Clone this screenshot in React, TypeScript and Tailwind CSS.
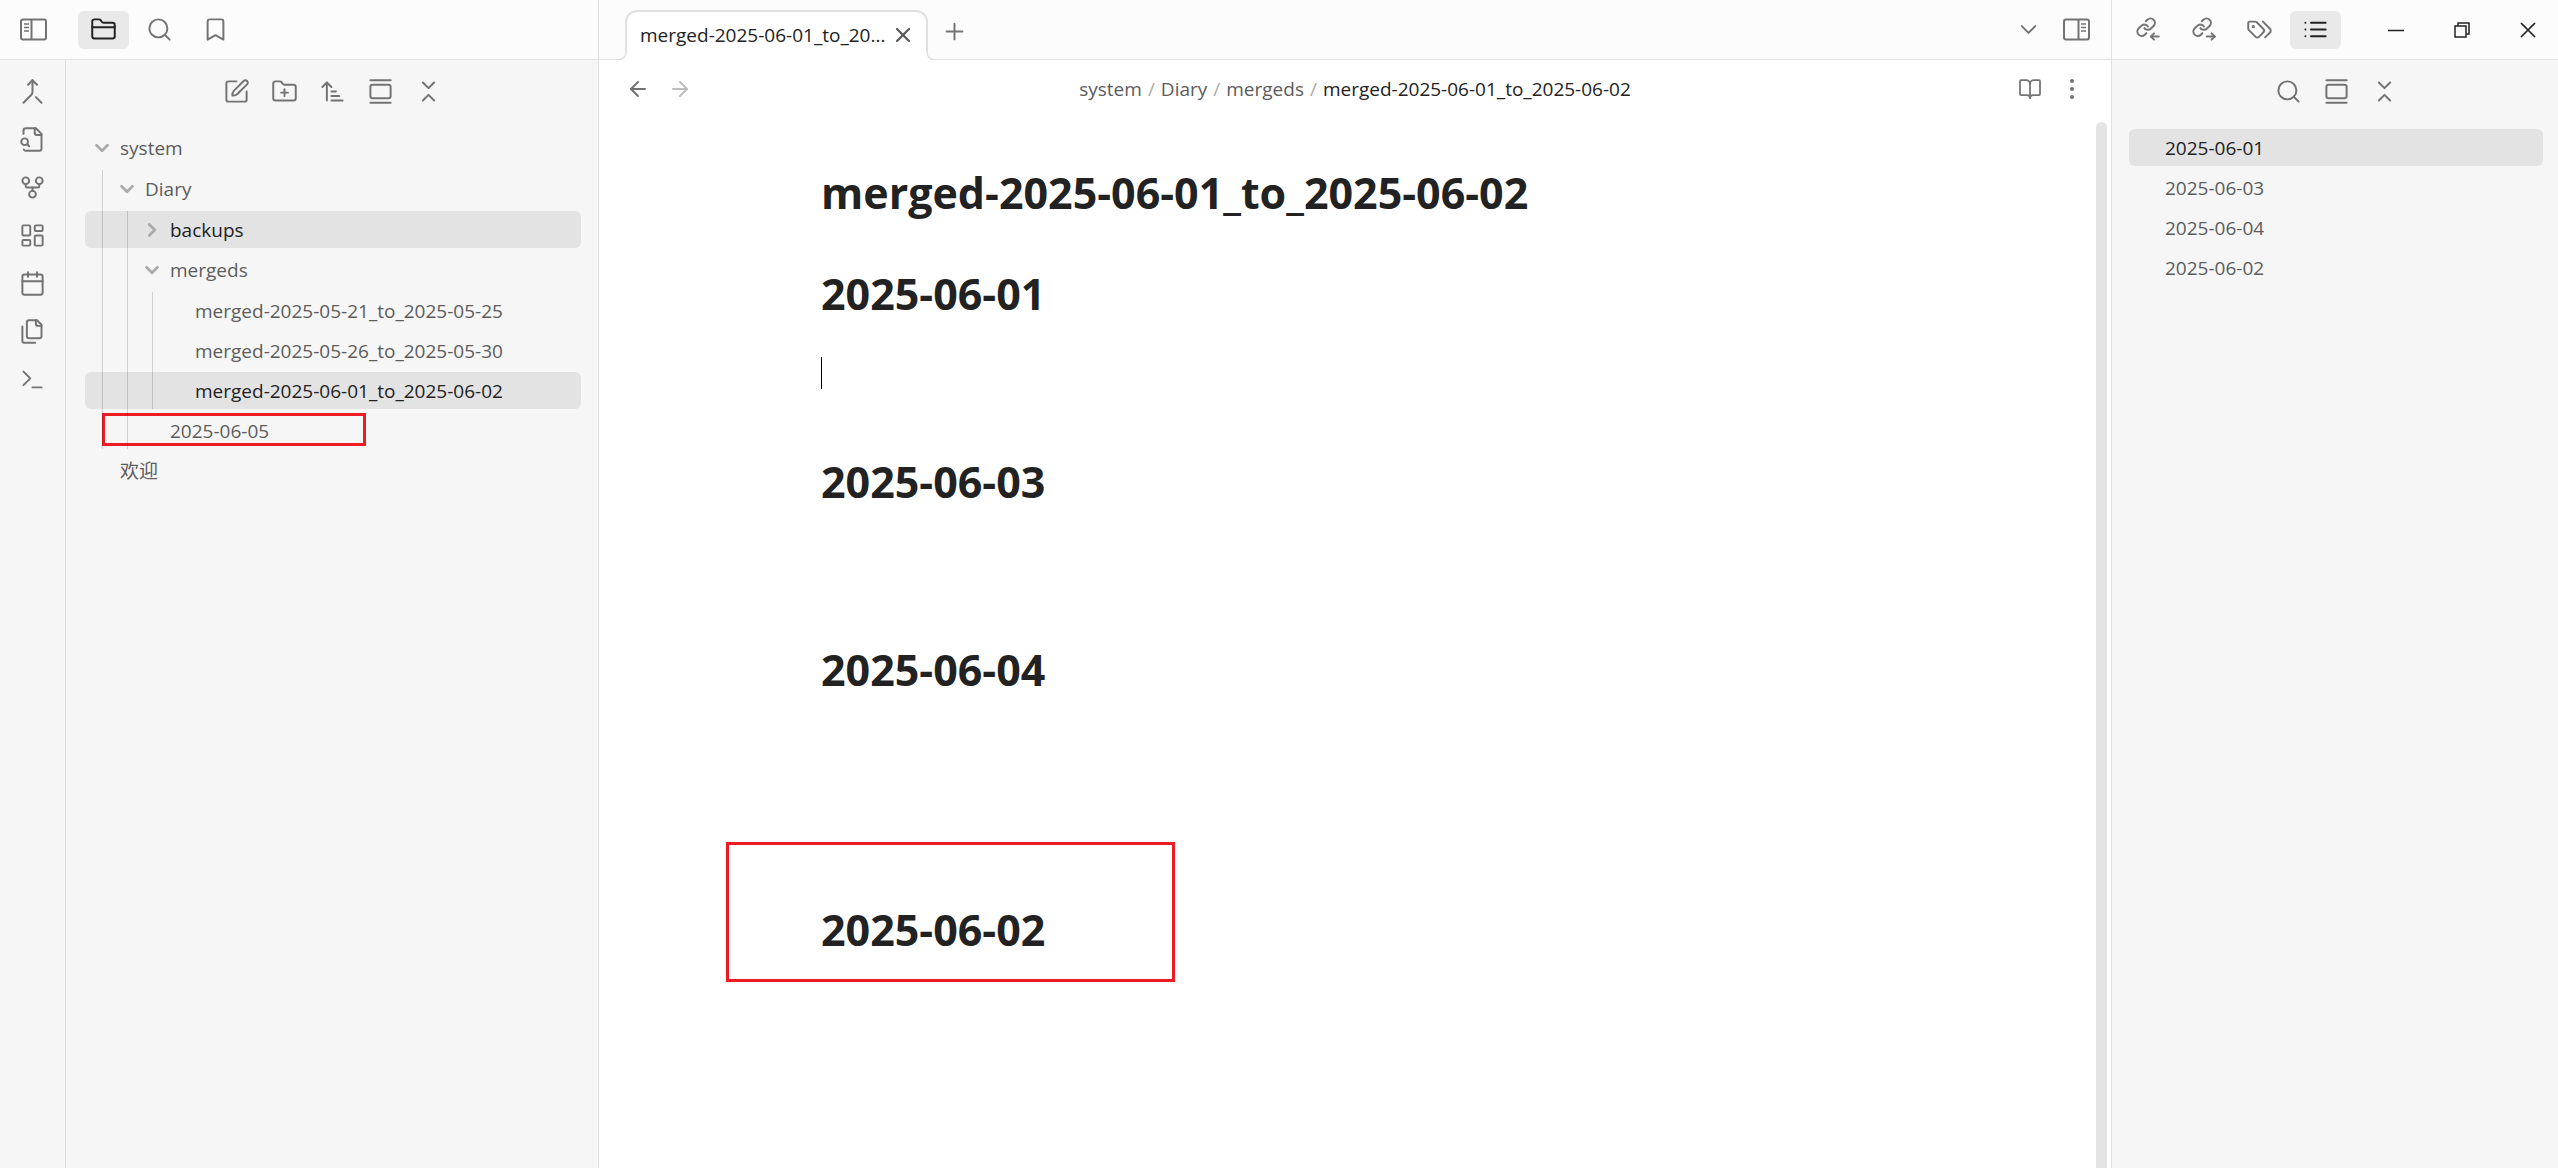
import React, { ReactNode } from "react";

type IconProps = { size?: string; stroke?: number; children: ReactNode };

function Icon({ size = "size-[27px]", stroke = 1.75, children }: IconProps) {
  return (
    <svg
      className={`${size} shrink-0`}
      viewBox="0 0 24 24"
      fill="none"
      stroke="currentColor"
      strokeWidth={stroke}
      strokeLinecap="round"
      strokeLinejoin="round"
      aria-hidden="true"
    >
      {children}
    </svg>
  );
}

const chain = (
  <g transform="translate(1.4 .6) scale(.78)" strokeWidth="2.3">
    <path d="M10 13a5 5 0 0 0 7.54.54l3-3a5 5 0 0 0-7.07-7.07l-1.72 1.71" />
    <path d="M14 11a5 5 0 0 0-7.54-.54l-3 3a5 5 0 0 0 7.07 7.07l1.71-1.71" />
  </g>
);

const icons = {
  folder: (
    <>
      <path d="M20 20a2 2 0 0 0 2-2V8a2 2 0 0 0-2-2h-7.9a2 2 0 0 1-1.69-.9L9.6 3.9A2 2 0 0 0 7.93 3H4a2 2 0 0 0-2 2v13a2 2 0 0 0 2 2Z" />
      <path d="M2 10h20" />
    </>
  ),
  search: (
    <>
      <circle cx="11" cy="11" r="8" />
      <path d="m21 21-4.3-4.3" />
    </>
  ),
  bookmark: <path d="m19 21-7-4-7 4V5a2 2 0 0 1 2-2h10a2 2 0 0 1 2 2v16z" />,
  merge: (
    <>
      <path d="m8 6 4-4 4 4" />
      <path d="M12 2v10.3a4 4 0 0 1-1.172 2.872L4 22" />
      <path d="m20 22-5-5" />
    </>
  ),
  fileSearch: (
    <>
      <path d="M14 2v4a2 2 0 0 0 2 2h4" />
      <path d="M4.268 21a2 2 0 0 0 1.727 1H18a2 2 0 0 0 2-2V7l-5-5H6a2 2 0 0 0-2 2v3" />
      <path d="m9 18-1.5-1.5" />
      <circle cx="5" cy="14" r="3" />
    </>
  ),
  fork: (
    <>
      <circle cx="12" cy="18" r="3" />
      <circle cx="6" cy="6" r="3" />
      <circle cx="18" cy="6" r="3" />
      <path d="M18 9v2c0 .6-.4 1-1 1H7c-.6 0-1-.4-1-1V9" />
      <path d="M12 12v3" />
    </>
  ),
  dashboard: (
    <>
      <rect width="7" height="9" x="3" y="3" rx="1" />
      <rect width="7" height="5" x="14" y="3" rx="1" />
      <rect width="7" height="9" x="14" y="12" rx="1" />
      <rect width="7" height="5" x="3" y="16" rx="1" />
    </>
  ),
  calendar: (
    <>
      <path d="M8 2v4" />
      <path d="M16 2v4" />
      <rect width="18" height="18" x="3" y="4" rx="2" />
      <path d="M3 10h18" />
    </>
  ),
  files: (
    <>
      <path d="M20 7h-3a2 2 0 0 1-2-2V2" />
      <path d="M9 18a2 2 0 0 1-2-2V4a2 2 0 0 1 2-2h7l4 4v10a2 2 0 0 1-2 2Z" />
      <path d="M3 7.6v12.8A1.6 1.6 0 0 0 4.6 22h9.8" />
    </>
  ),
  terminal: (
    <>
      <path d="m4 17 6-6-6-6" />
      <path d="M12 19h8" />
    </>
  ),
  edit: (
    <>
      <path d="M12 3H5a2 2 0 0 0-2 2v14a2 2 0 0 0 2 2h14a2 2 0 0 0 2-2v-7" />
      <path d="M18.375 2.625a2.121 2.121 0 1 1 3 3L13 14c-1 1-3.2 1.8-4.6 1.6-.2-1.4.6-3.6 1.6-4.6Z" />
    </>
  ),
  folderPlus: (
    <>
      <path d="M12 10v6" />
      <path d="M9 13h6" />
      <path d="M20 20a2 2 0 0 0 2-2V8a2 2 0 0 0-2-2h-7.9a2 2 0 0 1-1.69-.9L9.6 3.9A2 2 0 0 0 7.93 3H4a2 2 0 0 0-2 2v13a2 2 0 0 0 2 2Z" />
    </>
  ),
  sort: (
    <>
      <path d="m3 8 4-4 4 4" />
      <path d="M7 4v16" />
      <path d="M11 12h4" />
      <path d="M11 16h7" />
      <path d="M11 20h10" />
    </>
  ),
  gallery: (
    <>
      <path d="M3 2h18" />
      <rect width="18" height="12" x="3" y="6" rx="2" />
      <path d="M3 22h18" />
    </>
  ),
  collapse: (
    <>
      <path d="m7 20 5-5 5 5" />
      <path d="m7 4 5 5 5-5" />
    </>
  ),
  chevronDown: <path d="m6 9 6 6 6-6" />,
  chevronRight: <path d="m9 18 6-6-6-6" />,
  plus: (
    <>
      <path d="M5 12h14" />
      <path d="M12 5v14" />
    </>
  ),
  close: (
    <>
      <path d="M18 6 6 18" />
      <path d="m6 6 12 12" />
    </>
  ),
  arrowLeft: (
    <>
      <path d="m12 19-7-7 7-7" />
      <path d="M19 12H5" />
    </>
  ),
  arrowRight: (
    <>
      <path d="M5 12h14" />
      <path d="m12 5 7 7-7 7" />
    </>
  ),
  book: (
    <>
      <path d="M12 7v14" />
      <path d="M3 18a1 1 0 0 1-1-1V4a1 1 0 0 1 1-1h5a4 4 0 0 1 4 4 4 4 0 0 1 4-4h5a1 1 0 0 1 1 1v13a1 1 0 0 1-1 1h-6a3 3 0 0 0-3 3 3 3 0 0 0-3-3z" />
    </>
  ),
  more: (
    <>
      <circle cx="12" cy="12" r="1" />
      <circle cx="12" cy="4" r="1" />
      <circle cx="12" cy="20" r="1" />
    </>
  ),
  linkIn: (
    <>
      {chain}
      <path d="M22 18.2h-7" />
      <path d="m17.800 15.400-2.800 2.800 2.800 2.800" />
    </>
  ),
  linkOut: (
    <>
      {chain}
      <path d="M15 18.2h7" />
      <path d="m19.200 15.400 2.800 2.800-2.800 2.800" />
    </>
  ),
  tags: (
    <>
      <path d="m15 5 6.3 6.3a2.4 2.4 0 0 1 0 3.4L17 19" />
      <path d="M9.586 5.586A2 2 0 0 0 8.172 5H3a1 1 0 0 0-1 1v5.172a2 2 0 0 0 .586 1.414L8.29 18.29a2.426 2.426 0 0 0 3.42 0l3.58-3.58a2.426 2.426 0 0 0 0-3.42z" />
      <circle cx="6.5" cy="9.5" r=".6" fill="currentColor" />
    </>
  ),
  list: (
    <>
      <path d="M8 6h13" />
      <path d="M8 12h13" />
      <path d="M8 18h13" />
      <path d="M3 6h.01" />
      <path d="M3 12h.01" />
      <path d="M3 18h.01" />
    </>
  ),
};

function PanelIcon({ flip = false }: { flip?: boolean }) {
  return (
    <svg
      className={flip ? "h-[23px] w-[27px] -scale-x-100" : "h-[23px] w-[27px]"}
      viewBox="0 0 27 23"
      fill="none"
      stroke="currentColor"
      strokeWidth="2"
      aria-hidden="true"
    >
      <rect x="1" y="1.5" width="25" height="20" rx="2" />
      <path d="M11.500 1.500v20" />
      <path d="M4 6h5M4 9.500h5M4 13h5" strokeWidth="1.5" />
    </svg>
  );
}

function HeaderButton({ label, active, children }: { label: string; active?: boolean; children: ReactNode }) {
  return (
    <button
      type="button"
      aria-label={label}
      className={
        active
          ? "flex h-[38px] w-[51px] items-center justify-center rounded-md bg-[#e9e9e9] text-[#222222]"
          : "flex h-[38px] w-[51px] items-center justify-center rounded-md"
      }
    >
      <Icon>{children}</Icon>
    </button>
  );
}

function NavButton({ label, children }: { label: string; children: ReactNode }) {
  return (
    <button type="button" aria-label={label} className="flex h-10 w-12 items-center justify-center">
      <Icon>{children}</Icon>
    </button>
  );
}

type Node = { name: string; active?: boolean; open?: boolean; marked?: boolean; children?: Node[] };

const tree: Node[] = [
  {
    name: "system",
    open: true,
    children: [
      {
        name: "Diary",
        open: true,
        children: [
          { name: "backups", active: true, children: [] },
          {
            name: "mergeds",
            open: true,
            children: [
              { name: "merged-2025-05-21_to_2025-05-25" },
              { name: "merged-2025-05-26_to_2025-05-30" },
              { name: "merged-2025-06-01_to_2025-06-02", active: true },
            ],
          },
          { name: "2025-06-05", marked: true },
        ],
      },
    ],
  },
  { name: "欢迎" },
];

const indents = ["pl-[6px]", "pl-[31px]", "pl-14", "pl-[81px]"];
const guides = ["left-[17px]", "left-[42px]", "left-[67px]"];

function TreeItem({ node, depth }: { node: Node; depth: number }) {
  return (
    <li className="relative">
      <button
        type="button"
        aria-expanded={node.children ? !!node.open : undefined}
        className={`flex h-[37px] w-full items-center rounded-md text-left ${indents[depth]} ${
          node.active ? "bg-[#e3e3e3] text-[#222222]" : ""
        }`}
      >
        <span className="flex w-[29px] shrink-0 items-center text-[#ababab]">
          {node.children && (
            <Icon size="size-[22px]" stroke={3}>
              {node.open ? icons.chevronDown : icons.chevronRight}
            </Icon>
          )}
        </span>
        <span className="whitespace-nowrap">{node.name}</span>
      </button>
      {node.marked && (
        <span className="pointer-events-none absolute top-px left-[17px] h-[33px] w-[264px] border-3 border-[#ed1c24]" />
      )}
      {node.open && node.children && (
        <div className="relative mt-1">
          <TreeList nodes={node.children} depth={depth + 1} />
          <span className={`pointer-events-none absolute inset-y-0 z-10 w-px bg-black/15 ${guides[depth]}`} />
        </div>
      )}
    </li>
  );
}

function TreeList({ nodes, depth }: { nodes: Node[]; depth: number }) {
  return (
    <ul className="flex flex-col gap-[3px]">
      {nodes.map((n) => (
        <TreeItem key={n.name} node={n} depth={depth} />
      ))}
    </ul>
  );
}

const ribbon: [string, ReactNode][] = [
  ["Merge notes", icons.merge],
  ["Quick switcher", icons.fileSearch],
  ["Graph view", icons.fork],
  ["Canvas", icons.dashboard],
  ["Daily note", icons.calendar],
  ["Templates", icons.files],
  ["Command palette", icons.terminal],
];

const outline = ["2025-06-01", "2025-06-03", "2025-06-04", "2025-06-02"];

function LeftSide() {
  return (
    <aside className="flex w-[599px] shrink-0 flex-col border-r border-[#e0e0e0]">
      <div className="flex h-[60px] items-center border-b border-[#e0e0e0] bg-[#fcfcfc] pl-5">
        <button type="button" aria-label="Toggle left sidebar" className="mr-[31px]">
          <PanelIcon />
        </button>
        <div className="flex gap-[5px]">
          <HeaderButton label="Files" active>{icons.folder}</HeaderButton>
          <HeaderButton label="Search">{icons.search}</HeaderButton>
          <HeaderButton label="Bookmarks">{icons.bookmark}</HeaderButton>
        </div>
      </div>
      <div className="flex grow">
        <nav aria-label="Ribbon" className="flex w-[66px] shrink-0 flex-col items-center border-r border-[#e0e0e0] pt-[7px]">
          {ribbon.map(([label, icon]) => (
            <button key={label} type="button" aria-label={label} className="flex size-12 items-center justify-center">
              <Icon>{icon}</Icon>
            </button>
          ))}
        </nav>
        <div className="flex grow flex-col">
          <div className="flex justify-center pt-[11px] pb-[18px]">
            <NavButton label="New note">{icons.edit}</NavButton>
            <NavButton label="New folder">{icons.folderPlus}</NavButton>
            <NavButton label="Sort">{icons.sort}</NavButton>
            <NavButton label="Reveal current file">{icons.gallery}</NavButton>
            <NavButton label="Collapse all">{icons.collapse}</NavButton>
          </div>
          <div className="pr-[17px] pl-[19px] text-[#5c5c5c]">
            <TreeList nodes={tree} depth={0} />
          </div>
        </div>
      </div>
    </aside>
  );
}

function TabBar() {
  return (
    <div className="flex h-[60px] items-stretch border-b border-[#e0e0e0] bg-[#fcfcfc] pr-[21px] pl-[26px]">
      <div className="relative mt-[10px] -mb-px flex w-[303px] shrink-0 items-center rounded-t-xl border-2 border-b-0 border-[#e0e0e0] bg-white pr-[11px] pb-[3px] pl-[13px]">
        <span className="grow whitespace-nowrap text-[#222222]">merged-2025-06-01_to_20...</span>
        <button type="button" aria-label="Close tab" className="text-[#5c5c5c]">
          <Icon size="size-6" stroke={2.25}>{icons.close}</Icon>
        </button>
        <svg className="absolute bottom-0 -left-2 h-2 w-2" viewBox="0 0 8 8" aria-hidden="true">
          <path d="M8 0v8H0v-.5A7 7 0 0 0 7 0Z" fill="#fff" />
          <path d="M0 7.500A7 7 0 0 0 7 0" fill="none" stroke="#e0e0e0" strokeWidth="1.5" />
        </svg>
        <svg className="absolute -right-2 bottom-0 h-2 w-2" viewBox="0 0 8 8" aria-hidden="true">
          <path d="M0 0v8h8v-.5A7 7 0 0 1 1 0Z" fill="#fff" />
          <path d="M8 7.500A7 7 0 0 1 1 0" fill="none" stroke="#e0e0e0" strokeWidth="1.5" />
        </svg>
      </div>
      <button type="button" aria-label="New tab" className="ml-[13px] pt-1">
        <Icon>{icons.plus}</Icon>
      </button>
      <div className="ml-auto flex items-center gap-[21px]">
        <button type="button" aria-label="Tab list">
          <Icon>{icons.chevronDown}</Icon>
        </button>
        <button type="button" aria-label="Toggle right sidebar">
          <PanelIcon flip />
        </button>
      </div>
    </div>
  );
}

function Crumb({ children }: { children: ReactNode }) {
  return (
    <li className="flex gap-[6px]">
      <a href="#">{children}</a>
      <span className="text-[#ababab]">/</span>
    </li>
  );
}

function Heading({ children, gap }: { children: ReactNode; gap: string }) {
  return <h2 className={`text-[43px] leading-[60px] font-bold ${gap}`}>{children}</h2>;
}

function Editor() {
  return (
    <main className="flex min-w-0 grow flex-col bg-white">
      <TabBar />
      <div className="flex h-[62px] shrink-0 items-center px-[27px] pb-[5px]">
        <div className="flex w-32 gap-[18px]">
          <button type="button" aria-label="Back">
            <Icon size="size-6" stroke={2}>{icons.arrowLeft}</Icon>
          </button>
          <button type="button" aria-label="Forward" className="text-[#bdbdbd]">
            <Icon size="size-6" stroke={2}>{icons.arrowRight}</Icon>
          </button>
        </div>
        <nav aria-label="Path" className="flex grow justify-center">
          <ol className="flex gap-[6px] whitespace-nowrap text-[#5c5c5c]">
            <Crumb>system</Crumb>
            <Crumb>Diary</Crumb>
            <Crumb>mergeds</Crumb>
            <li className="text-[#222222]">merged-2025-06-01_to_2025-06-02</li>
          </ol>
        </nav>
        <div className="flex w-32 justify-end gap-[18px]">
          <button type="button" aria-label="Reading view">
            <Icon size="size-6">{icons.book}</Icon>
          </button>
          <button type="button" aria-label="More options">
            <Icon size="size-6" stroke={2}>{icons.more}</Icon>
          </button>
        </div>
      </div>
      <div className="flex grow">
        <article className="mx-auto w-[1050px] pt-[41px] text-[#222222]">
          <h1 className="text-[43px] leading-[60px] font-bold">merged-2025-06-01_to_2025-06-02</h1>
          <Heading gap="mt-[41px]">2025-06-01</Heading>
          <div className="mt-[33px] h-8 w-px bg-black" />
          <Heading gap="mt-[63px]">2025-06-03</Heading>
          <Heading gap="mt-32">2025-06-04</Heading>
          <div className="relative mt-[200px]">
            <Heading gap="mt-0">2025-06-02</Heading>
            <span className="pointer-events-none absolute -top-[58px] -left-[95px] h-[140px] w-[449px] border-3 border-[#ed1c24]" />
          </div>
        </article>
        <div className="flex w-[18px] shrink-0 pl-[3px]">
          <div className="w-[11px] rounded-t-full bg-[#e4e4e4]" />
        </div>
      </div>
    </main>
  );
}

function RightSide() {
  return (
    <aside className="flex w-[447px] shrink-0 flex-col border-l border-[#e0e0e0]">
      <div className="flex h-[60px] items-center justify-between border-b border-[#e0e0e0] bg-[#fcfcfc] pl-[10px]">
        <div className="flex gap-[5px]">
          <HeaderButton label="Backlinks">{icons.linkIn}</HeaderButton>
          <HeaderButton label="Outgoing links">{icons.linkOut}</HeaderButton>
          <HeaderButton label="Tags">{icons.tags}</HeaderButton>
          <HeaderButton label="Outline" active>{icons.list}</HeaderButton>
        </div>
        <div className="flex gap-[6px] text-[#222222]">
          <button type="button" aria-label="Minimize" className="flex h-10 w-[60px] items-center justify-center">
            <svg className="size-4" viewBox="0 0 16 16" aria-hidden="true">
              <path d="M0 8.500h16" stroke="currentColor" strokeWidth="1.5" />
            </svg>
          </button>
          <button type="button" aria-label="Restore" className="flex h-10 w-[60px] items-center justify-center">
            <svg className="size-4" viewBox="0 0 16 16" fill="none" stroke="currentColor" strokeWidth="1.5" aria-hidden="true">
              <path d="M1 4h11v11H1z" />
              <path d="M4 4V1h11v11h-3" />
            </svg>
          </button>
          <button type="button" aria-label="Close window" className="flex h-10 w-[60px] items-center justify-center">
            <svg className="size-4" viewBox="0 0 16 16" fill="none" stroke="currentColor" strokeWidth="1.75" aria-hidden="true">
              <path d="m1 1 14 14M15 1 1 15" />
            </svg>
          </button>
        </div>
      </div>
      <div className="flex justify-center pt-[11px] pb-[18px] pl-[2px]">
        <NavButton label="Search headings">{icons.search}</NavButton>
        <NavButton label="Auto reveal">{icons.gallery}</NavButton>
        <NavButton label="Collapse all">{icons.collapse}</NavButton>
      </div>
      <ul className="flex flex-col gap-[3px] pr-[15px] pl-[17px] text-[#5c5c5c]">
        {outline.map((t, i) => (
          <li key={t}>
            <button
              type="button"
              className={
                i === 0
                  ? "flex h-[37px] w-full items-center rounded-md bg-[#e3e3e3] pl-9 text-[#222222]"
                  : "flex h-[37px] w-full items-center rounded-md pl-9"
              }
            >
              {t}
            </button>
          </li>
        ))}
      </ul>
    </aside>
  );
}

export default function App() {
  return (
    <div className="flex min-h-screen bg-[#f6f6f6] font-['Open_Sans','Noto_Sans_CJK_SC',sans-serif] text-[19px] leading-[28px] text-[#737373]">
      <LeftSide />
      <Editor />
      <RightSide />
    </div>
  );
}
